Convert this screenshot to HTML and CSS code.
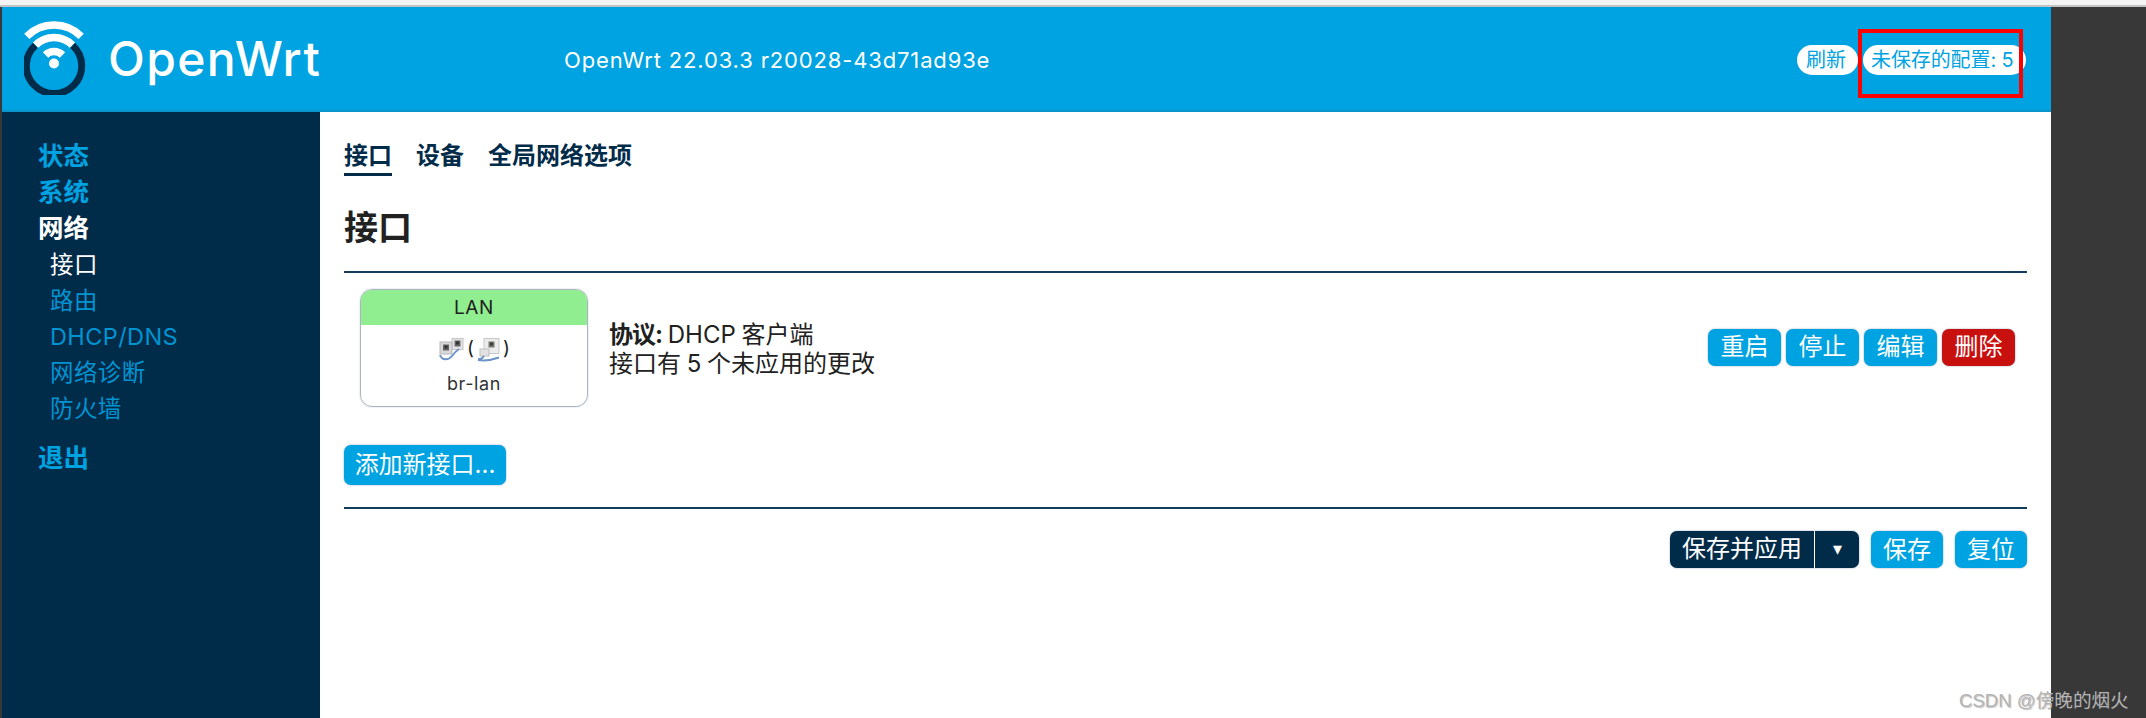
FILE: index.html
```html
<!DOCTYPE html>
<html>
<head>
	<meta charset="utf-8">
	<title>接口 - OpenWrt</title>
	<link rel="stylesheet" href="styles.css">
</head>
<body>
	<div class="topstrip"></div>
	<div class="app">
		<!-- 顶部 -->
		<header class="header">
			<div class="brand">
				<svg class="logo" viewBox="24 22 62 75" width="62" height="75">
					<path d="M35.4 47.3A27.7 27.7 0 1 0 72.6 47.3" fill="none" stroke="#002b49" stroke-width="7"/>
					<circle cx="54" cy="65.5" r="5" fill="#fff"/>
					<g fill="none" stroke="#fff" stroke-width="7.5">
						<path d="M45.5 57A12 12 0 0 1 62.5 57"/>
						<path d="M35.6 47.1A26 26 0 0 1 72.4 47.1"/>
						<path d="M26.8 38.3A38.5 38.5 0 0 1 81.2 38.3"/>
					</g>
				</svg>
				<span class="brandname">OpenWrt</span>
			</div>
			<div class="version">OpenWrt 22.03.3 r20028-43d71ad93e</div>
			<div class="pills">
				<span class="pill">刷新</span>
				<span class="pill pill-wide">未保存的配置: 5</span>
			</div>
		</header>
		<div class="body">
			<!-- 左侧菜单 -->
			<nav class="sidebar">
				<a class="top">状态</a>
				<a class="top">系统</a>
				<a class="top on">网络</a>
				<a class="sub on">接口</a>
				<a class="sub">路由</a>
				<a class="sub">DHCP/DNS</a>
				<a class="sub">网络诊断</a>
				<a class="sub">防火墙</a>
				<a class="top logout">退出</a>
			</nav>
			<!-- 内容 -->
			<main class="main">
				<ul class="tabs">
					<li class="active">接口</li>
					<li>设备</li>
					<li>全局网络选项</li>
				</ul>
				<h2 class="title">接口</h2>
				<div class="row">
					<div class="card">
						<div class="card-head">LAN</div>
						<div class="card-icons">
							<svg width="25" height="23" viewBox="0 0 25 23">
								<rect x="13" y="0.5" width="11" height="11" fill="#e4e4e4" stroke="#c4c4c4"/>
								<rect x="15.5" y="2.5" width="6" height="6" fill="#666"/>
								<rect x="17" y="3.5" width="3" height="3" fill="#333"/>
								<rect x="1" y="4" width="12" height="12" fill="#d8d8d8" stroke="#b8b8b8"/>
								<rect x="4" y="6.5" width="6" height="6" fill="#666"/>
								<rect x="5.5" y="7.5" width="3" height="3" fill="#333"/>
								<path d="M1 17C3 23 10 22 13 18S17 13 20 11" fill="none" stroke="#6c93c9" stroke-width="2"/>
							</svg>
							<span class="paren">(</span>
							<svg width="23" height="24" viewBox="0 0 23 24">
								<rect x="7" y="0.5" width="15" height="15" fill="#ececec" stroke="#c8c8c8"/>
								<rect x="11.5" y="3.5" width="6" height="6" fill="#777"/>
								<rect x="13" y="4.5" width="3" height="3" fill="#3f3f30"/>
								<rect x="3" y="11" width="9" height="7" fill="#e2e2e2" stroke="#c0c0c0"/>
								<path d="M1 22C7 23 15 22 22 19.5M2 20C2 22 5 21 7 18" fill="none" stroke="#6c93c9" stroke-width="2"/>
							</svg>
							<span class="paren">)</span>
						</div>
						<div class="card-name">br-lan</div>
					</div>
					<div class="info">
						<div><b>协议:</b> DHCP 客户端</div>
						<div>接口有 5 个未应用的更改</div>
					</div>
					<div class="actions">
						<button class="btn" type="button">重启</button>
						<button class="btn" type="button">停止</button>
						<button class="btn" type="button">编辑</button>
						<button class="btn btn-red" type="button">删除</button>
					</div>
				</div>
				<div class="addrow">
					<button class="btn btn-add" type="button">添加新接口...</button>
				</div>
				<div class="footer">
					<div class="split">
						<span class="split-text">保存并应用</span>
						<span class="split-arrow">▾</span>
					</div>
					<button class="btn btn-foot" type="button">保存</button>
					<button class="btn btn-foot" type="button">复位</button>
				</div>
			</main>
		</div>
	</div>
	<div class="redbox"></div>
	<div class="mark">CSDN @傍晚的烟火</div>
</body>
</html>
```

FILE: styles.css
```css
*{
	margin:0;
	padding:0;
	list-style:none;
	box-sizing:border-box;
}
html,body{
	height:718px;
	overflow:hidden;
}
body{
	background:#383838;
	font-family:"Inter","Noto Sans CJK SC",sans-serif;
	position:relative;
}
.topstrip{
	height:7px;
	background:#f4f4f4;
	border-bottom:2px solid #c4c4c4;
}
.app{
	width:2049px;
	height:711px;
	margin-left:2px;
	display:flex;
	flex-direction:column;
}

/* 顶部 */
.header{
	height:105px;
	background:#00a3e1;
	border-bottom:2px solid #0b95cb;
	display:flex;
	align-items:center;
	color:#fff;
}
.brand{
	width:562px;
	padding-left:22px;
	display:flex;
	align-items:center;
	gap:22px;
}
.logo{
	margin-top:-3px;
}
.brandname{
	font-size:48px;
	font-weight:500;
	letter-spacing:1.4px;
}
.version{
	font-size:22px;
	letter-spacing:0.85px;
	margin-top:2px;
}
.pills{
	margin-left:auto;
	display:flex;
	gap:5px;
	padding-right:25px;
	margin-top:2px;
}
.pill{
	height:30px;
	line-height:30px;
	padding:0 12px 0 9px;
	background:#fff;
	color:#00a3e1;
	font-size:20px;
	border-radius:15px;
	white-space:nowrap;
}
.pill-wide{
	width:163px;
	padding:0 8px;
	letter-spacing:-0.1px;
}

/* 左侧菜单 */
.body{
	flex:1;
	display:flex;
	min-height:0;
}
.sidebar{
	width:318px;
	background:#002b49;
	padding:26px 0 0 36px;
	display:flex;
	flex-direction:column;
}
.sidebar a{
	display:block;
	height:36.2px;
	line-height:36.2px;
	font-size:24px;
	color:#00a3e1;
	white-space:nowrap;
}
.sidebar .top{
	font-size:25.5px;
	font-weight:700;
}
.sidebar .sub{
	padding-left:12px;
	font-size:23.5px;
	letter-spacing:0.4px;
	color:#0094d2;
}
.sidebar .on{
	color:#fff;
}
.sidebar .logout{
	margin-top:12px;
}

/* 内容 */
.main{
	flex:1;
	background:#fff;
	padding:28px 24px 0 24px;
	color:#212121;
}
.tabs{
	display:flex;
	gap:24px;
	height:32px;
	font-size:24px;
	font-weight:700;
	color:#002b49;
	line-height:32px;
}
.tabs li{
	height:36px;
}
.tabs .active{
	border-bottom:3px solid #002b49;
}
.title{
	font-size:34px;
	font-weight:700;
	line-height:52px;
	margin-top:30px;
	border-bottom:2px solid #123d5a;
	height:71px;
}
.row{
	display:flex;
	align-items:center;
	padding:16px 12px 0 16px;
}
.card{
	width:228px;
	height:118px;
	border:1px solid #a9b6c2;
	border-radius:12px;
	overflow:hidden;
	box-shadow:0 0 2px #c6ced6;
	text-align:center;
}
.card-head{
	height:35px;
	line-height:36px;
	background:#90ee90;
	font-size:19px;
	letter-spacing:0.6px;
}
.card-icons{
	height:47px;
	padding-top:2px;
	display:flex;
	justify-content:center;
	align-items:center;
	gap:4px;
}
.paren{
	font-size:19px;
	line-height:24px;
	margin:-2px -1px 0;
}
.card-name{
	font-size:18px;
	line-height:24px;
	letter-spacing:0.6px;
	color:#333;
}
.info{
	margin-left:21px;
	font-size:24px;
	line-height:29px;
	margin-top:2px;
	word-spacing:-1px;
}
.info b{
	letter-spacing:-1px;
}
.actions{
	margin-left:auto;
	display:flex;
	gap:5px;
	margin-top:-2px;
}
.btn{
	display:block;
	width:73px;
	height:37px;
	border:0;
	border-radius:7px;
	background:#00a3e1;
	color:#fff;
	font-family:inherit;
	font-size:24px;
	line-height:36px;
	box-shadow:0 0 2px #8aa1b5;
	white-space:nowrap;
}
.btn-red{
	background:#c8100f;
}
.btn-foot{
	width:72px;
}
.addrow{
	padding-top:38px;
}
.btn-add{
	width:162px;
	height:40px;
}
.footer{
	margin-top:22px;
	border-top:2px solid #123d5a;
	padding-top:22px;
	display:flex;
	justify-content:flex-end;
	gap:12px;
}
.split{
	width:189px;
	height:37px;
	background:#002b49;
	color:#fff;
	border-radius:7px;
	box-shadow:0 0 2px #8aa1b5;
	display:flex;
	font-size:24px;
	line-height:36px;
	white-space:nowrap;
}
.split-text{
	width:145px;
	text-align:center;
	border-right:1px solid #fff;
}
.split-arrow{
	flex:1;
	text-align:center;
	font-size:18px;
}

/* 截图上的标注 */
.redbox{
	position:absolute;
	left:1858px;
	top:29px;
	width:165px;
	height:69px;
	border:4px solid #f00;
}
.mark{
	position:absolute;
	left:1959px;
	top:689px;
	font-family:"Liberation Sans","Noto Sans CJK SC",sans-serif;
	font-size:18.6px;
	line-height:24px;
	color:#b4b4b4;
	text-shadow:1px 1px 1px rgba(80,80,80,.35);
	white-space:nowrap;
}
```
